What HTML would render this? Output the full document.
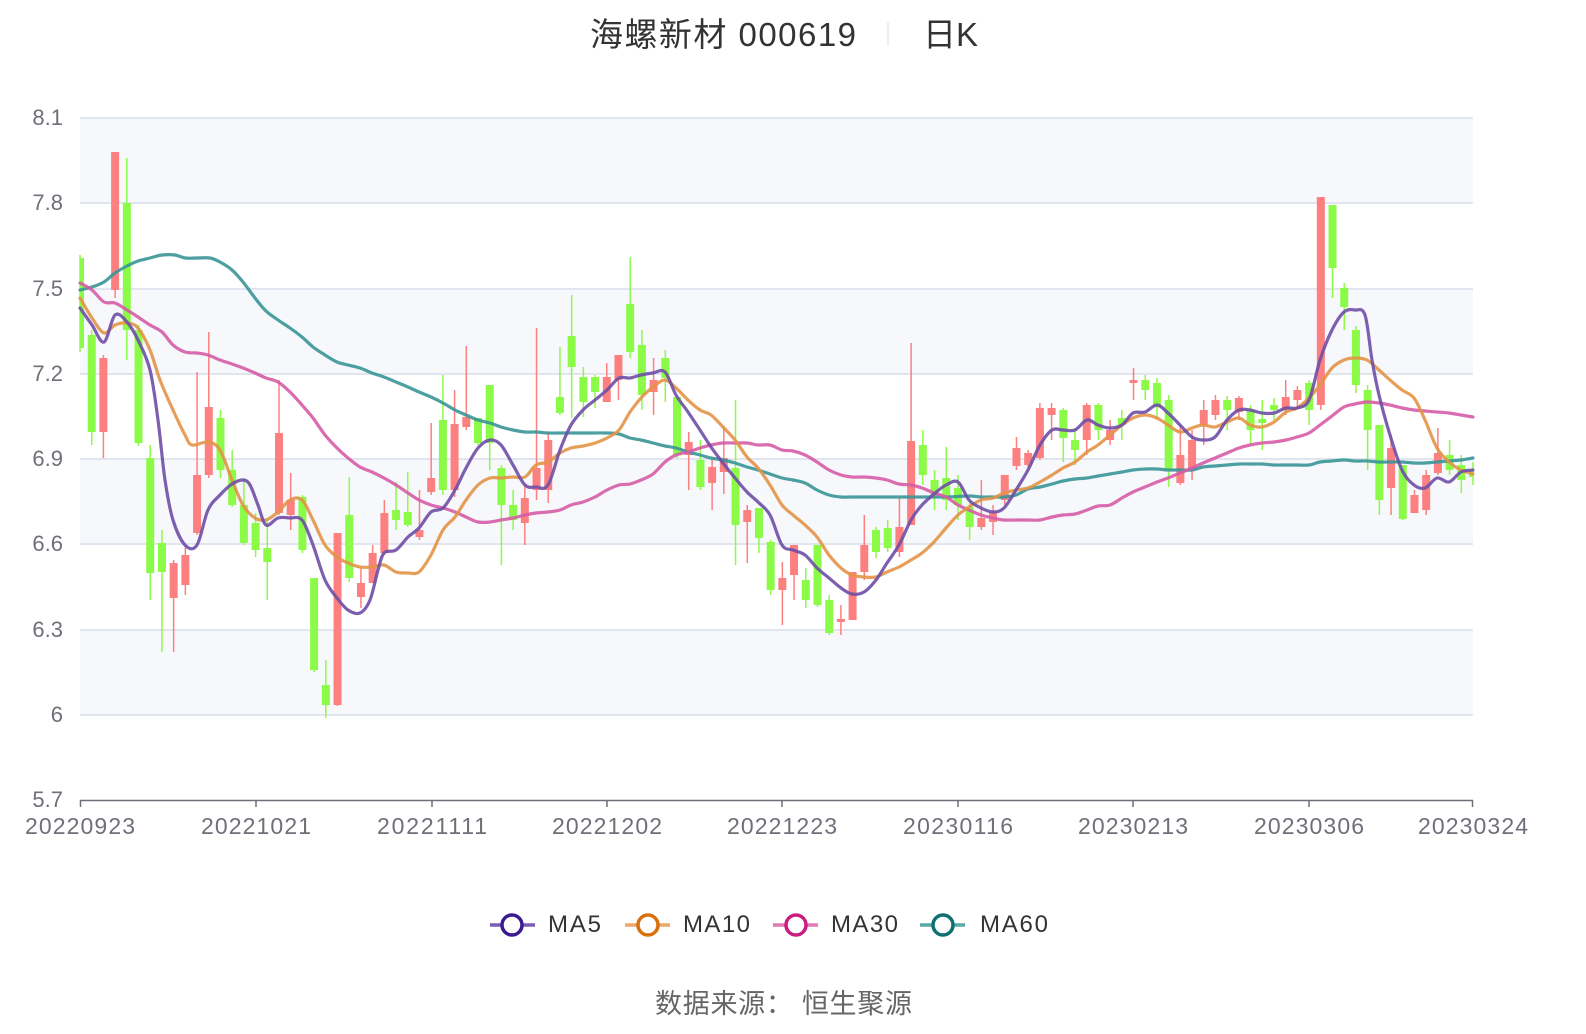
<!DOCTYPE html>
<html><head><meta charset="utf-8"><style>
html,body{margin:0;padding:0;background:#fff;width:1586px;height:1034px;overflow:hidden}
svg{display:block}
text{font-family:"Liberation Sans","Noto Sans CJK SC",sans-serif}
</style></head><body>
<svg id="s" width="1586" height="1034" xmlns="http://www.w3.org/2000/svg">
<rect width="1586" height="1034" fill="#fff"/>
<rect x="80" y="118" width="1393" height="85" fill="#f6f8fc"/>
<rect x="80" y="289" width="1393" height="85" fill="#f6f8fc"/>
<rect x="80" y="459" width="1393" height="85" fill="#f6f8fc"/>
<rect x="80" y="630" width="1393" height="85" fill="#f6f8fc"/>
<g stroke="#e0e5f0" stroke-width="2">
<line x1="80" y1="118" x2="1473" y2="118"/><line x1="80" y1="203" x2="1473" y2="203"/>
<line x1="80" y1="289" x2="1473" y2="289"/><line x1="80" y1="374" x2="1473" y2="374"/>
<line x1="80" y1="459" x2="1473" y2="459"/><line x1="80" y1="544" x2="1473" y2="544"/>
<line x1="80" y1="630" x2="1473" y2="630"/><line x1="80" y1="715" x2="1473" y2="715"/>
</g>
<g font-size="22" fill="#6e7079" text-anchor="end">
<text x="63" y="125">8.1</text><text x="63" y="210">7.8</text><text x="63" y="296">7.5</text>
<text x="63" y="381">7.2</text><text x="63" y="466">6.9</text><text x="63" y="551">6.6</text>
<text x="63" y="637">6.3</text><text x="63" y="722">6</text><text x="63" y="807">5.7</text>
</g>
<g id="candles"></g>
<g id="lines" fill="none" stroke-width="3.2" stroke-linejoin="round" stroke-linecap="round"></g>
<line x1="80" y1="800.5" x2="1473" y2="800.5" stroke="#6e7079" stroke-width="1.5"/>
<g stroke="#6e7079" stroke-width="1.5">
<line x1="80.5" y1="800" x2="80.5" y2="807"/><line x1="256" y1="800" x2="256" y2="807"/>
<line x1="432" y1="800" x2="432" y2="807"/><line x1="607" y1="800" x2="607" y2="807"/>
<line x1="782" y1="800" x2="782" y2="807"/><line x1="958" y1="800" x2="958" y2="807"/>
<line x1="1133" y1="800" x2="1133" y2="807"/><line x1="1309" y1="800" x2="1309" y2="807"/>
<line x1="1472.5" y1="800" x2="1472.5" y2="807"/>
</g>
<g font-size="23" fill="#6e7079">
<text x="25" y="834" textLength="110">20220923</text><text x="201" y="834" textLength="110">20221021</text><text x="377" y="834" textLength="110">20221111</text>
<text x="552" y="834" textLength="110">20221202</text><text x="727" y="834" textLength="110">20221223</text><text x="903" y="834" textLength="110">20230116</text>
<text x="1078" y="834" textLength="110">20230213</text><text x="1254" y="834" textLength="110">20230306</text><text x="1418" y="834" textLength="110">20230324</text>
</g>
<g font-size="33" fill="#333">
<text x="590" y="46" textLength="266">海螺新材 000619</text>
<text x="923" y="46" textLength="55">日K</text>
</g>
<line x1="888" y1="22" x2="888" y2="46" stroke="#e8e8e8" stroke-width="1.5"/>
<g stroke-width="3.5">
<line x1="490" y1="925" x2="535" y2="925" stroke="#7c5db6"/><circle cx="512" cy="925" r="10" fill="#fff" stroke="#3c1a8f"/>
<line x1="625" y1="925" x2="670" y2="925" stroke="#eca866"/><circle cx="648" cy="925" r="10" fill="#fff" stroke="#d8700e"/>
<line x1="773" y1="925" x2="818" y2="925" stroke="#e07ab5"/><circle cx="796" cy="925" r="10" fill="#fff" stroke="#c91d80"/>
<line x1="920" y1="925" x2="965" y2="925" stroke="#5aa9a9"/><circle cx="943" cy="925" r="10" fill="#fff" stroke="#0e7070"/>
</g>
<g font-size="24" fill="#333">
<text x="548" y="932" textLength="53">MA5</text><text x="683" y="932" textLength="67">MA10</text><text x="831" y="932" textLength="67">MA30</text><text x="980" y="932" textLength="68">MA60</text>
</g>
<text x="655" y="1013" font-size="27" fill="#666" textLength="257">数据来源：  恒生聚源</text>
</svg>
<script>
var C=[
['g',258,348,255,352],['g',335,432,330,445],['r',358,432,355,458],['r',152,290,152,298],['g',203,330,158,360],
['g',330,443,325,446],['g',458,573,445,600],['g',543,572,530,652],['r',563,598,560,652],['r',555,585,545,595],
['r',475,533,372,535],['r',407,475,332,478],['g',418,470,410,478],['g',470,505,450,507],['g',505,543,478,545],
['g',523,550,513,557],['g',548,562,520,600],['r',433,513,380,515],['r',500,515,473,530],['g',497,550,495,553],
['g',578,670,578,672],['g',685,705,660,718],['r',533,705,533,706],['g',515,578,477,582],['r',583,597,568,608],
['r',553,583,545,583],['r',513,553,500,555],['g',510,520,482,530],['g',512,525,472,527],['r',530,537,490,540],
['r',478,492,423,495],['g',420,490,375,495],['r',424,490,390,497],['r',417,427,346,430],['g',418,443,418,445],
['g',385,443,385,470],['g',468,505,465,565],['g',505,520,490,530],['r',498,523,485,545],['r',468,490,328,500],
['r',440,490,432,503],['g',397,413,347,415],['g',336,367,295,418],['g',377,402,367,417],['g',377,392,375,408],
['r',377,402,363,402],['r',355,380,355,400],['g',304,352,257,358],['g',345,395,330,410],['r',380,392,358,415],
['g',358,378,350,402],['g',397,455,397,458],['r',442,455,432,490],['g',460,487,440,490],['r',467,483,458,510],
['r',458,472,426,494],['g',468,525,400,565],['r',510,522,505,563],['g',508,538,508,553],['g',542,590,540,595],
['r',578,590,562,625],['r',545,575,545,600],['g',580,600,568,608],['g',545,605,545,607],['g',600,633,595,635],
['r',619,622,605,635],['r',572,620,572,620],['r',545,572,515,580],['g',530,552,527,558],['g',528,548,520,552],
['r',527,552,498,557],['r',441,525,343,525],['g',445,475,430,485],['g',480,495,470,510],['g',478,500,447,510],
['g',488,505,475,520],['g',507,527,500,540],['r',518,527,480,530],['r',512,522,505,535],['r',475,500,475,505],
['r',448,466,437,470],['r',453,465,450,468],['r',408,458,403,460],['r',408,415,403,440],['g',410,438,408,462],
['g',440,450,428,465],['r',405,440,403,455],['g',405,430,403,440],['r',430,440,420,445],['g',418,425,410,440],
['r',380,383,368,400],['g',380,390,375,400],['g',383,407,378,420],['g',400,470,395,487],['r',455,483,425,485],
['r',440,470,430,480],['r',410,425,400,445],['r',400,415,395,420],['g',400,410,396,430],['r',398,412,396,420],
['g',410,430,405,445],['g',419,423,400,450],['g',405,410,398,420],['r',397,410,380,415],['r',390,400,386,408],
['g',383,410,380,425],['r',197,405,197,410],['g',205,268,205,298],['g',288,307,283,330],['g',330,385,326,393],
['g',390,430,385,470],['g',425,500,425,515],['r',448,488,435,515],['g',465,519,465,520],['r',495,513,490,512],
['r',475,510,470,515],['r',453,473,428,475],['g',455,470,440,475],['g',465,480,455,493],['g',470,477,462,485]];
var g=document.getElementById('candles'),h='';
var n=C.length,step=1393/(n-1);
for(var i=0;i<n;i++){var c=C[i],x=80+i*step,col=c[0]=='r'?'#fd8080':'#8bfb47';
var w=8,x0=Math.max(80,x-w/2),x1=Math.min(1473,x+w/2);
h+='<line x1="'+x+'" y1="'+c[3]+'" x2="'+x+'" y2="'+c[4]+'" stroke="'+col+'" stroke-width="1.5"/>';
h+='<rect x="'+x0+'" y="'+c[1]+'" width="'+(x1-x0)+'" height="'+Math.max(1.5,c[2]-c[1])+'" fill="'+col+'"/>';}
g.innerHTML=h;
function P(a){var p=[];for(var i=0;i<a.length;i+=2)p.push([a[i],a[i+1]]);
var d='M'+p[0][0]+','+p[0][1];for(var i=0;i<p.length-1;i++){var p0=p[i-1]||p[i],p1=p[i],p2=p[i+1],p3=p[i+2]||p2;
d+=' C'+(p1[0]+(p2[0]-p0[0])/6)+','+(p1[1]+(p2[1]-p0[1])/6)+' '+(p2[0]-(p3[0]-p1[0])/6)+','+(p2[1]-(p3[1]-p1[1])/6)+' '+p2[0]+','+p2[1];}return d;}
var L=[
['#3a9596',[80,290,92,287,104,282,115,273,127,266,138,261,150,258,162,255,175,255,185,258,197,258,210,258,220,262,232,270,243,282,255,298,266,311,278,320,290,328,302,337,313,347,325,355,337,362,348,365,360,368,372,373,384,377,396,382,408,387,419,392,431,397,443,403,455,410,466,415,478,420,490,423,501,427,513,430,525,432,536,432,548,433,560,433,583,433,607,433,619,434,630,438,641,440,653,443,665,446,676,448,688,452,700,455,711,458,723,460,735,463,747,467,758,470,770,474,782,478,793,480,805,483,817,490,829,495,841,497,852,497,876,497,899,497,922,497,946,497,969,496,981,497,993,497,1004,497,1016,495,1028,489,1040,487,1052,484,1063,481,1075,479,1087,478,1098,476,1110,474,1122,472,1133,470,1145,469,1157,469,1168,470,1180,470,1192,470,1203,467,1215,466,1227,465,1239,464,1250,464,1262,464,1274,465,1286,465,1297,465,1309,465,1320,462,1332,461,1344,460,1355,461,1367,461,1379,462,1390,462,1402,462,1414,463,1425,463,1437,462,1449,461,1461,460,1473,458]],
['#d65ca6',[80,283,92,290,104,302,115,303,127,310,138,317,150,325,162,332,173,345,185,352,197,353,208,355,220,360,232,364,243,368,255,373,266,378,278,382,290,392,302,405,313,418,325,435,337,448,348,458,360,467,372,472,384,478,396,485,408,493,419,500,431,505,443,508,455,512,466,517,478,522,490,522,501,520,513,518,525,515,536,513,548,512,560,510,571,505,583,502,595,497,607,490,619,485,630,484,641,480,653,474,665,462,676,455,688,452,700,448,711,445,723,443,735,443,747,443,758,445,770,445,782,450,793,451,805,455,817,462,829,470,841,475,852,477,864,477,876,478,887,480,899,484,911,485,922,488,934,493,946,497,958,505,969,510,981,515,993,518,1004,520,1016,520,1028,520,1040,520,1052,517,1063,515,1075,514,1087,510,1098,506,1110,505,1122,498,1133,492,1145,487,1157,482,1168,478,1180,473,1192,468,1203,463,1215,458,1227,453,1239,448,1250,445,1262,443,1274,442,1286,440,1297,437,1309,433,1320,425,1332,416,1344,407,1355,404,1367,402,1379,403,1390,405,1402,408,1414,410,1425,411,1437,412,1449,413,1461,415,1473,417]],
['#e39447',[80,298,92,318,104,333,115,325,127,323,138,328,150,350,160,380,173,410,185,435,192,445,208,442,220,450,232,480,243,505,255,518,266,520,278,512,290,500,302,500,313,520,325,545,337,557,348,563,360,567,372,567,384,565,396,572,408,573,419,572,431,555,443,530,455,517,466,500,478,485,490,478,501,478,513,477,525,477,536,465,548,462,560,453,571,448,583,446,595,443,607,438,619,430,630,412,641,398,653,387,665,380,676,388,688,400,700,410,711,415,723,427,735,440,747,457,758,468,770,485,782,505,793,515,805,525,817,537,829,555,841,568,852,575,864,577,876,577,887,572,899,567,911,560,922,553,934,542,946,528,958,515,969,507,981,500,993,498,1004,493,1016,490,1028,488,1040,482,1052,475,1063,468,1075,462,1087,452,1098,445,1110,435,1122,425,1133,418,1145,415,1157,418,1168,425,1180,432,1192,428,1203,425,1215,427,1227,422,1239,418,1250,425,1262,427,1274,422,1286,412,1297,408,1309,398,1320,385,1332,368,1344,360,1355,358,1367,360,1379,370,1390,380,1402,390,1414,398,1425,420,1437,448,1449,462,1461,470,1473,474]],
['#6f4ea6',[80,308,92,325,104,342,115,315,127,322,138,340,150,370,158,420,165,480,173,520,185,545,197,545,208,510,220,495,232,484,243,480,250,485,258,505,266,525,278,518,290,518,302,520,313,545,325,580,337,598,348,610,360,613,370,600,378,570,384,553,396,550,408,537,419,528,431,512,443,508,455,490,466,468,478,448,490,440,501,445,513,465,525,485,536,487,548,485,560,450,571,425,583,410,595,400,607,390,619,378,630,378,641,375,653,373,665,372,676,395,688,412,700,430,711,447,723,463,735,478,747,492,758,502,770,515,782,545,793,550,805,555,817,568,829,578,841,588,852,594,864,592,876,580,887,563,899,545,911,520,922,505,934,494,946,485,958,482,969,500,981,508,993,512,1004,508,1016,490,1028,470,1040,445,1052,430,1063,430,1075,430,1087,420,1098,425,1110,428,1122,425,1133,413,1145,412,1157,405,1168,413,1180,425,1192,437,1203,440,1215,437,1227,420,1239,410,1250,410,1262,413,1274,413,1286,408,1297,408,1309,400,1320,360,1332,330,1344,312,1355,310,1365,315,1372,360,1379,395,1390,435,1402,470,1414,485,1425,488,1437,478,1449,482,1461,472,1473,470]]];
var lh='';L.forEach(function(l){lh+='<path d="'+P(l[1])+'" stroke="'+l[0]+'" stroke-opacity="0.9"/>';});
document.getElementById('lines').innerHTML=lh;
</script>
</body></html>
